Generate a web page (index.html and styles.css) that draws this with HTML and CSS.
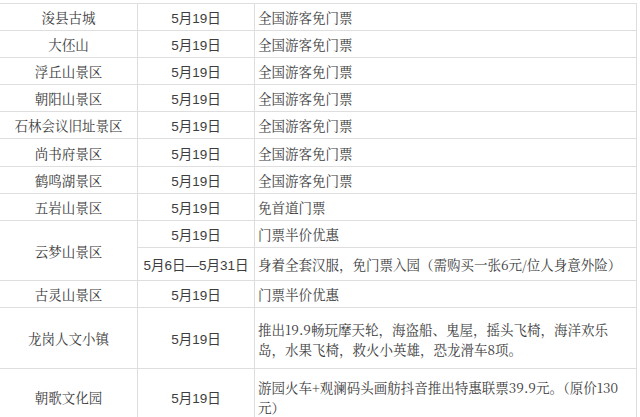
FILE: index.html
```html
<!DOCTYPE html>
<html lang="zh-CN">
<head>
<meta charset="utf-8">
<title>景区优惠</title>
<link rel="stylesheet" href="styles.css">
</head>
<body>
<div class="sheet">
  <div class="grid">
    <div class="cell name">浚县古城</div><div class="cell date">5月19日</div><div class="cell desc">全国游客免门票</div>
    <div class="cell name">大伾山</div><div class="cell date">5月19日</div><div class="cell desc">全国游客免门票</div>
    <div class="cell name">浮丘山景区</div><div class="cell date">5月19日</div><div class="cell desc">全国游客免门票</div>
    <div class="cell name">朝阳山景区</div><div class="cell date">5月19日</div><div class="cell desc">全国游客免门票</div>
    <div class="cell name">石林会议旧址景区</div><div class="cell date">5月19日</div><div class="cell desc">全国游客免门票</div>
    <div class="cell name">尚书府景区</div><div class="cell date">5月19日</div><div class="cell desc">全国游客免门票</div>
    <div class="cell name">鹤鸣湖景区</div><div class="cell date">5月19日</div><div class="cell desc">全国游客免门票</div>
    <div class="cell name">五岩山景区</div><div class="cell date">5月19日</div><div class="cell desc">免首道门票</div>
    <div class="cell name span2">云梦山景区</div><div class="cell date">5月19日</div><div class="cell desc">门票半价优惠</div>
    <div class="cell date">5月6日—5月31日</div><div class="cell desc">身着全套汉服，免门票入园（需购买一张6元/位人身意外险）</div>
    <div class="cell name">古灵山景区</div><div class="cell date">5月19日</div><div class="cell desc">门票半价优惠</div>
    <div class="cell name">龙岗人文小镇</div><div class="cell date">5月19日</div><div class="cell desc multi">推出19.9畅玩摩天轮，海盗船、鬼屋，摇头飞椅，海洋欢乐<br>岛，水果飞椅，救火小英雄，恐龙滑车8项。</div>
    <div class="cell name">朝歌文化园</div><div class="cell date">5月19日</div><div class="cell desc multi last">游园火车+观澜码头画舫抖音推出特惠联票39.9元。（原价130<br>元）</div>
  </div>
</div>
</body>
</html>
```

FILE: styles.css
```css
html, body {
  margin: 0;
  padding: 0;
  background: #ffffff;
}
.sheet {
  padding-top: 3px;
  width: 640px;
  height: 417px;
  overflow: hidden;
  box-sizing: border-box;
}
.grid {
  display: grid;
  grid-template-columns: 137px 116px 381px;
  grid-template-rows: 26px 26px 26px 26px 26px 27px 26px 26px 26px 32px 26px 60px 56px;
  gap: 1px;
  padding: 1px 1px 1px 0;
  width: 637px;
  box-sizing: border-box;
  background: #dedede;
  font-family: "Noto Serif CJK SC", "Noto Sans CJK SC", sans-serif;
  font-size: 13.5px;
  color: #3d3d3d;
}
.cell {
  background: #ffffff;
  display: flex;
  align-items: center;
  white-space: nowrap;
  overflow: hidden;
}
.name {
  justify-content: center;
}
.span2 {
  grid-row: span 2;
}
.date {
  justify-content: center;
  font-family: "Liberation Sans", "Noto Sans CJK SC", sans-serif;
}
.desc {
  padding-left: 3px;
}
.multi {
  line-height: 20px;
  padding-top: 2px;
}
.last {
  padding-top: 0;
}
```
